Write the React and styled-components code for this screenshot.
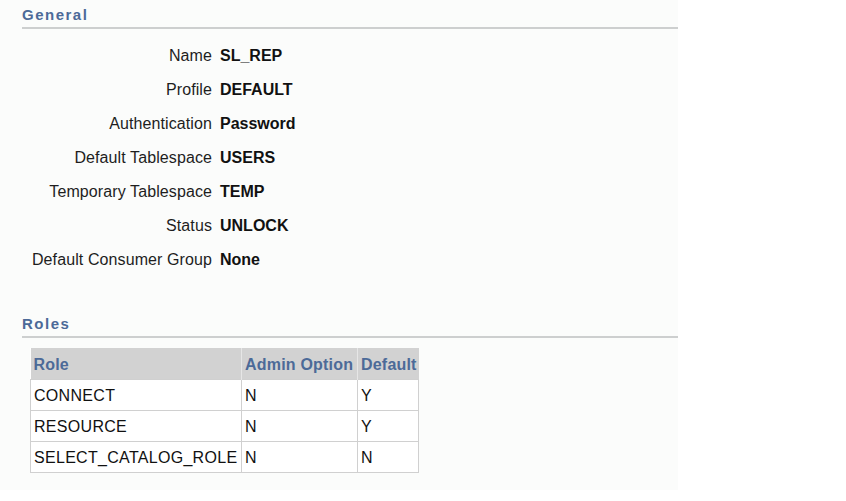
import React from "react";
import styled, { createGlobalStyle } from "styled-components";

const Global = createGlobalStyle`
  html, body { margin: 0; padding: 0; background: #ffffff; }
  body { font-family: "Liberation Sans", Arial, sans-serif; color: #111; }
`;

const Page = styled.div`
  width: 678px;
  min-height: 490px;
  background: #fbfcfb;
  padding: 6px 0 0 22px;
  box-sizing: border-box;
`;

const Section = styled.section`
  margin-bottom: ${(p) => p.$mb || 0}px;
`;

const Heading = styled.h2`
  margin: 0;
  font-size: 15px;
  font-weight: bold;
  color: #4c6a98;
  letter-spacing: 1.5px;
  line-height: 18px;
  padding-bottom: 3px;
  border-bottom: 2px solid #cdcfcf;
`;

const Fields = styled.div`
  display: grid;
  grid-template-columns: 190px auto;
  column-gap: 8px;
  row-gap: 16px;
  padding-top: 18px;
`;

const Label = styled.div`
  text-align: right;
  font-size: 16px;
  line-height: 18px;
  letter-spacing: 0.1px;
  color: #1e1e1e;
`;

const Value = styled.div`
  font-size: 16px;
  line-height: 18px;
  font-weight: bold;
  color: #111;
`;

const Table = styled.table`
  border-collapse: collapse;
  table-layout: fixed;
  width: 388px;
  margin: 10px 0 0 8px;
  font-size: 16px;
  background: #fff;
`;

const Col = styled.col`
  width: ${(p) => p.$w}px;
`;

const HeadRow = styled.tr`
  height: 31px;
`;

const Row = styled.tr`
  height: 31px;
`;

const Th = styled.th`
  background: #d2d2d2;
  color: #4c6a98;
  text-align: left;
  font-weight: bold;
  padding: 4px 3px 0;
  letter-spacing: 0.2px;
  border-right: 1px solid #e6e6e6;
  white-space: nowrap;
  overflow: visible;
  &:last-child { border-right: none; }
`;

const Td = styled.td`
  padding: 3px 2px 0 3px;
  border: 1px solid #d0d0d0;
  letter-spacing: 0.3px;
  color: #111;
  white-space: nowrap;
  overflow: visible;
`;

const fields = [
  ["Name", "SL_REP"],
  ["Profile", "DEFAULT"],
  ["Authentication", "Password"],
  ["Default Tablespace", "USERS"],
  ["Temporary Tablespace", "TEMP"],
  ["Status", "UNLOCK"],
  ["Default Consumer Group", "None"],
];

const roles = [
  ["CONNECT", "N", "Y"],
  ["RESOURCE", "N", "Y"],
  ["SELECT_CATALOG_ROLE", "N", "N"],
];

export default function App() {
  return (
    <>
      <Global />
      <Page>
        <Section $mb={46}>
          <Heading>General</Heading>
          <Fields>
            {fields.map(([l, v]) => (
              <React.Fragment key={l}>
                <Label>{l}</Label>
                <Value>{v}</Value>
              </React.Fragment>
            ))}
          </Fields>
        </Section>
        <Section>
          <Heading>Roles</Heading>
          <Table>
            <colgroup>
              <Col $w={211} />
              <Col $w={116} />
              <Col $w={61} />
            </colgroup>
            <thead>
              <HeadRow>
                <Th>Role</Th>
                <Th>Admin Option</Th>
                <Th>Default</Th>
              </HeadRow>
            </thead>
            <tbody>
              {roles.map((r) => (
                <Row key={r[0]}>
                  {r.map((c, i) => (
                    <Td key={i}>{c}</Td>
                  ))}
                </Row>
              ))}
            </tbody>
          </Table>
        </Section>
      </Page>
    </>
  );
}
